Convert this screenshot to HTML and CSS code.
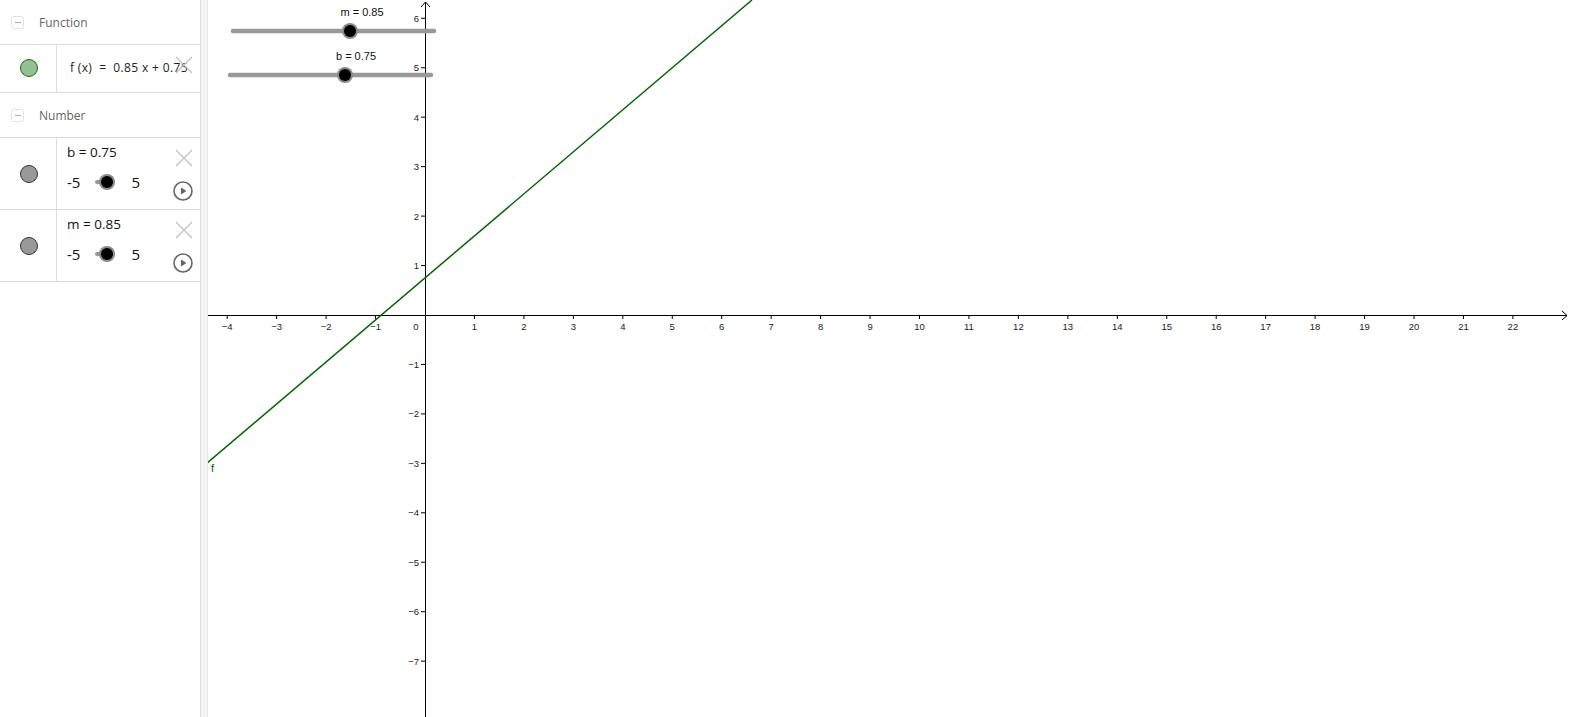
FILE: index.html
```html
<!DOCTYPE html>
<html>
<head>
<meta charset="utf-8">
<link rel="stylesheet" href="styles.css">
</head>
<body>
<div class="app">
  <div class="panel">
    <div class="group-header">
      <span class="collapse"><span class="dash"></span></span>
      <span class="group-title">Function</span>
    </div>
    <div class="item item-func">
      <div class="marble-col"><span class="marble marble-green"></span></div>
      <div class="content">
        <span class="func-text">f (x) &nbsp;=&nbsp; 0.85 x + 0.75</span>
      </div>
      <svg class="del del-func" viewBox="0 0 18 18"><path d="M1 1L17 17M17 1L1 17"/></svg>
    </div>
    <div class="group-header">
      <span class="collapse"><span class="dash"></span></span>
      <span class="group-title">Number</span>
    </div>
    <div class="item item-num">
      <div class="marble-col"><span class="marble marble-gray"></span></div>
      <div class="content">
        <div class="num-def">b = 0.75</div>
        <div class="num-slider">
          <span class="lim">-5</span>
          <svg class="mini" viewBox="0 0 40 20"><line class="mini-track" x1="4" y1="10" x2="20" y2="10"/><circle class="halo" cx="14" cy="10" r="8"/><circle class="knob" cx="14" cy="10" r="6"/></svg>
          <span class="lim">5</span>
        </div>
      </div>
      <svg class="del del-num" viewBox="0 0 18 18"><path d="M1 1L17 17M17 1L1 17"/></svg>
      <svg class="play" viewBox="0 0 22 22"><circle cx="11" cy="11" r="9"/><path d="M9 7.5L14.5 11L9 14.5Z"/></svg>
    </div>
    <div class="item item-num">
      <div class="marble-col"><span class="marble marble-gray"></span></div>
      <div class="content">
        <div class="num-def">m = 0.85</div>
        <div class="num-slider">
          <span class="lim">-5</span>
          <svg class="mini" viewBox="0 0 40 20"><line class="mini-track" x1="4" y1="10" x2="20" y2="10"/><circle class="halo" cx="14" cy="10" r="8"/><circle class="knob" cx="14" cy="10" r="6"/></svg>
          <span class="lim">5</span>
        </div>
      </div>
      <svg class="del del-num" viewBox="0 0 18 18"><path d="M1 1L17 17M17 1L1 17"/></svg>
      <svg class="play" viewBox="0 0 22 22"><circle cx="11" cy="11" r="9"/><path d="M9 7.5L14.5 11L9 14.5Z"/></svg>
    </div>
  </div>
  <div class="splitter"></div>
  <div class="graph">
    <svg class="plot" width="1379" height="717" viewBox="0 0 1379 717">
      <line class="axis" x1="0" y1="315.5" x2="1359" y2="315.5"/>
      <path class="axis" d="M1354 311L1359 315.5L1354 320"/>
      <line class="axis" x1="217.5" y1="2" x2="217.5" y2="717"/>
      <path class="axis" d="M213 7L217.5 2L222 7"/>
      <path class="axis" d="M19.2 315v4M68.65 315v4M118.1 315v4M167.55 315v4M266.45 315v4M315.9 315v4M365.35 315v4M414.8 315v4M464.25 315v4M513.7 315v4M563.15 315v4M612.6 315v4M662.05 315v4M711.5 315v4M760.95 315v4M810.4 315v4M859.85 315v4M909.3 315v4M958.75 315v4M1008.2 315v4M1057.65 315v4M1107.1 315v4M1156.55 315v4M1206 315v4M1255.45 315v4M1304.9 315v4"/>
      <path class="axis" d="M213 18.3h4.5M213 67.75h4.5M213 117.2h4.5M213 166.65h4.5M213 216.1h4.5M213 265.55h4.5M213 364.45h4.5M213 413.9h4.5M213 463.35h4.5M213 512.8h4.5M213 562.25h4.5M213 611.7h4.5M213 661.15h4.5"/>
      <g class="xlab">
        <text x="19.2" y="330">−4</text>
        <text x="68.65" y="330">−3</text>
        <text x="118.1" y="330">−2</text>
        <text x="167.55" y="330">−1</text>
        <text x="208" y="330">0</text>
        <text x="266.45" y="330">1</text>
        <text x="315.9" y="330">2</text>
        <text x="365.35" y="330">3</text>
        <text x="414.8" y="330">4</text>
        <text x="464.25" y="330">5</text>
        <text x="513.7" y="330">6</text>
        <text x="563.15" y="330">7</text>
        <text x="612.6" y="330">8</text>
        <text x="662.05" y="330">9</text>
        <text x="711.5" y="330">10</text>
        <text x="760.95" y="330">11</text>
        <text x="810.4" y="330">12</text>
        <text x="859.85" y="330">13</text>
        <text x="909.3" y="330">14</text>
        <text x="958.75" y="330">15</text>
        <text x="1008.2" y="330">16</text>
        <text x="1057.65" y="330">17</text>
        <text x="1107.1" y="330">18</text>
        <text x="1156.55" y="330">19</text>
        <text x="1206" y="330">20</text>
        <text x="1255.45" y="330">21</text>
        <text x="1304.9" y="330">22</text>
      </g>
      <g class="ylab">
        <text x="211" y="21.8">6</text>
        <text x="211" y="71.25">5</text>
        <text x="211" y="120.7">4</text>
        <text x="211" y="170.15">3</text>
        <text x="211" y="219.6">2</text>
        <text x="211" y="269.05">1</text>
        <text x="211" y="367.95">−1</text>
        <text x="211" y="417.4">−2</text>
        <text x="211" y="466.85">−3</text>
        <text x="211" y="516.3">−4</text>
        <text x="211" y="565.75">−5</text>
        <text x="211" y="615.2">−6</text>
        <text x="211" y="664.65">−7</text>
      </g>
      <line class="fline" x1="-1" y1="463.2" x2="544" y2="0"/>
      <text class="flabel" x="3" y="472">f</text>
      <text class="slab" x="154" y="16">m = 0.85</text>
      <line class="track" x1="25" y1="31" x2="226" y2="31"/>
      <circle class="halo" cx="142" cy="31" r="8"/>
      <circle class="knob" cx="142" cy="31" r="6"/>
      <text class="slab" x="148" y="60">b = 0.75</text>
      <line class="track" x1="22" y1="75" x2="223" y2="75"/>
      <circle class="halo" cx="137" cy="75" r="8"/>
      <circle class="knob" cx="137" cy="75" r="6"/>
    </svg>
  </div>
</div>
</body>
</html>
```
FILE: styles.css
```css
html, body {
  margin: 0;
  padding: 0;
  background: #fff;
  overflow: hidden;
}
.app {
  display: flex;
  width: 1586px;
  height: 717px;
  font-family: "Open Sans", "Noto Sans", sans-serif;
}
.panel {
  width: 200px;
  flex: none;
  display: flex;
  flex-direction: column;
}
.splitter {
  width: 6px;
  flex: none;
  background: #f3f3f3;
  border-left: 1px solid #dcdcdc;
  border-right: 1px solid #e6e6e6;
}
.graph {
  flex: 1;
  overflow: hidden;
}
.plot {
  display: block;
}
.group-header {
  height: 44px;
  border-bottom: 1px solid #dcdcdc;
  display: flex;
  align-items: center;
  padding-left: 11px;
}
.collapse {
  width: 13px;
  height: 13px;
  border: 1px solid #e2e2e2;
  border-radius: 3px;
  display: flex;
  align-items: center;
  justify-content: center;
  box-sizing: border-box;
}
.dash {
  width: 6px;
  height: 1px;
  background: #aaa;
}
.group-title {
  margin-left: 15px;
  font-size: 12px;
  color: #666;
}
.item {
  display: flex;
  border-bottom: 1px solid #dcdcdc;
  position: relative;
}
.item-func {
  height: 47px;
}
.item-num {
  height: 71px;
}
.marble-col {
  width: 56px;
  flex: none;
  border-right: 1px solid #dcdcdc;
  display: flex;
  align-items: center;
  justify-content: center;
}
.item-func .marble-col {
  padding-bottom: 2px;
}
.marble {
  width: 18px;
  height: 18px;
  border-radius: 50%;
  box-sizing: border-box;
  margin-left: 1px;
}
.marble-green {
  background: #93c193;
  border: 1px solid #1e6a1e;
}
.marble-gray {
  background: #999;
  border: 1px solid #333;
}
.content {
  flex: 1;
  display: flex;
  flex-direction: column;
  justify-content: center;
  padding-left: 13px;
}
.func-text {
  font-size: 12px;
  color: #222;
  white-space: nowrap;
  letter-spacing: 0.35px;
  margin-bottom: 2px;
}
.item-num .content {
  justify-content: flex-start;
  padding-left: 10px;
}
.num-def {
  margin-top: 4px;
  font-size: 13.5px;
  color: #111;
  height: 20px;
  line-height: 20px;
}
.num-slider {
  display: flex;
  align-items: center;
  margin-top: 10px;
  height: 20px;
}
.lim {
  font-size: 15px;
  color: #111;
  line-height: 20px;
}
.mini {
  width: 40px;
  height: 20px;
  margin-left: 13px;
  margin-right: -2px;
}
.mini-track {
  stroke: #999;
  stroke-width: 4;
  stroke-linecap: round;
}
.del {
  position: absolute;
  width: 18px;
  height: 18px;
  fill: none;
  stroke: #c4c4c4;
  stroke-width: 1.4;
}
.del-func {
  left: 175px;
  top: 11px;
}
.del-num {
  left: 175px;
  top: 11px;
}
.play {
  position: absolute;
  left: 172px;
  top: 42px;
  width: 22px;
  height: 22px;
}
.play circle {
  fill: none;
  stroke: #666;
  stroke-width: 1.6;
}
.play path {
  fill: #666;
}
.axis {
  stroke: #000;
  stroke-width: 1;
  fill: none;
}
.xlab text {
  font-family: "Liberation Sans", Arial, sans-serif;
  font-size: 9.5px;
  text-anchor: middle;
  fill: #222;
}
.ylab text {
  font-family: "Liberation Sans", Arial, sans-serif;
  font-size: 9.5px;
  text-anchor: end;
  fill: #222;
}
.fline {
  stroke: #006400;
  stroke-width: 1.5;
}
.flabel {
  font-family: "Liberation Sans", Arial, sans-serif;
  font-size: 11px;
  fill: #006400;
}
.slab {
  font-family: "Liberation Sans", Arial, sans-serif;
  font-size: 11px;
  text-anchor: middle;
  fill: #111;
}
.track {
  stroke: #999;
  stroke-width: 4.5;
  stroke-linecap: round;
}
.halo {
  fill: #8a8a8a;
}
.knob {
  fill: #000;
}
```
